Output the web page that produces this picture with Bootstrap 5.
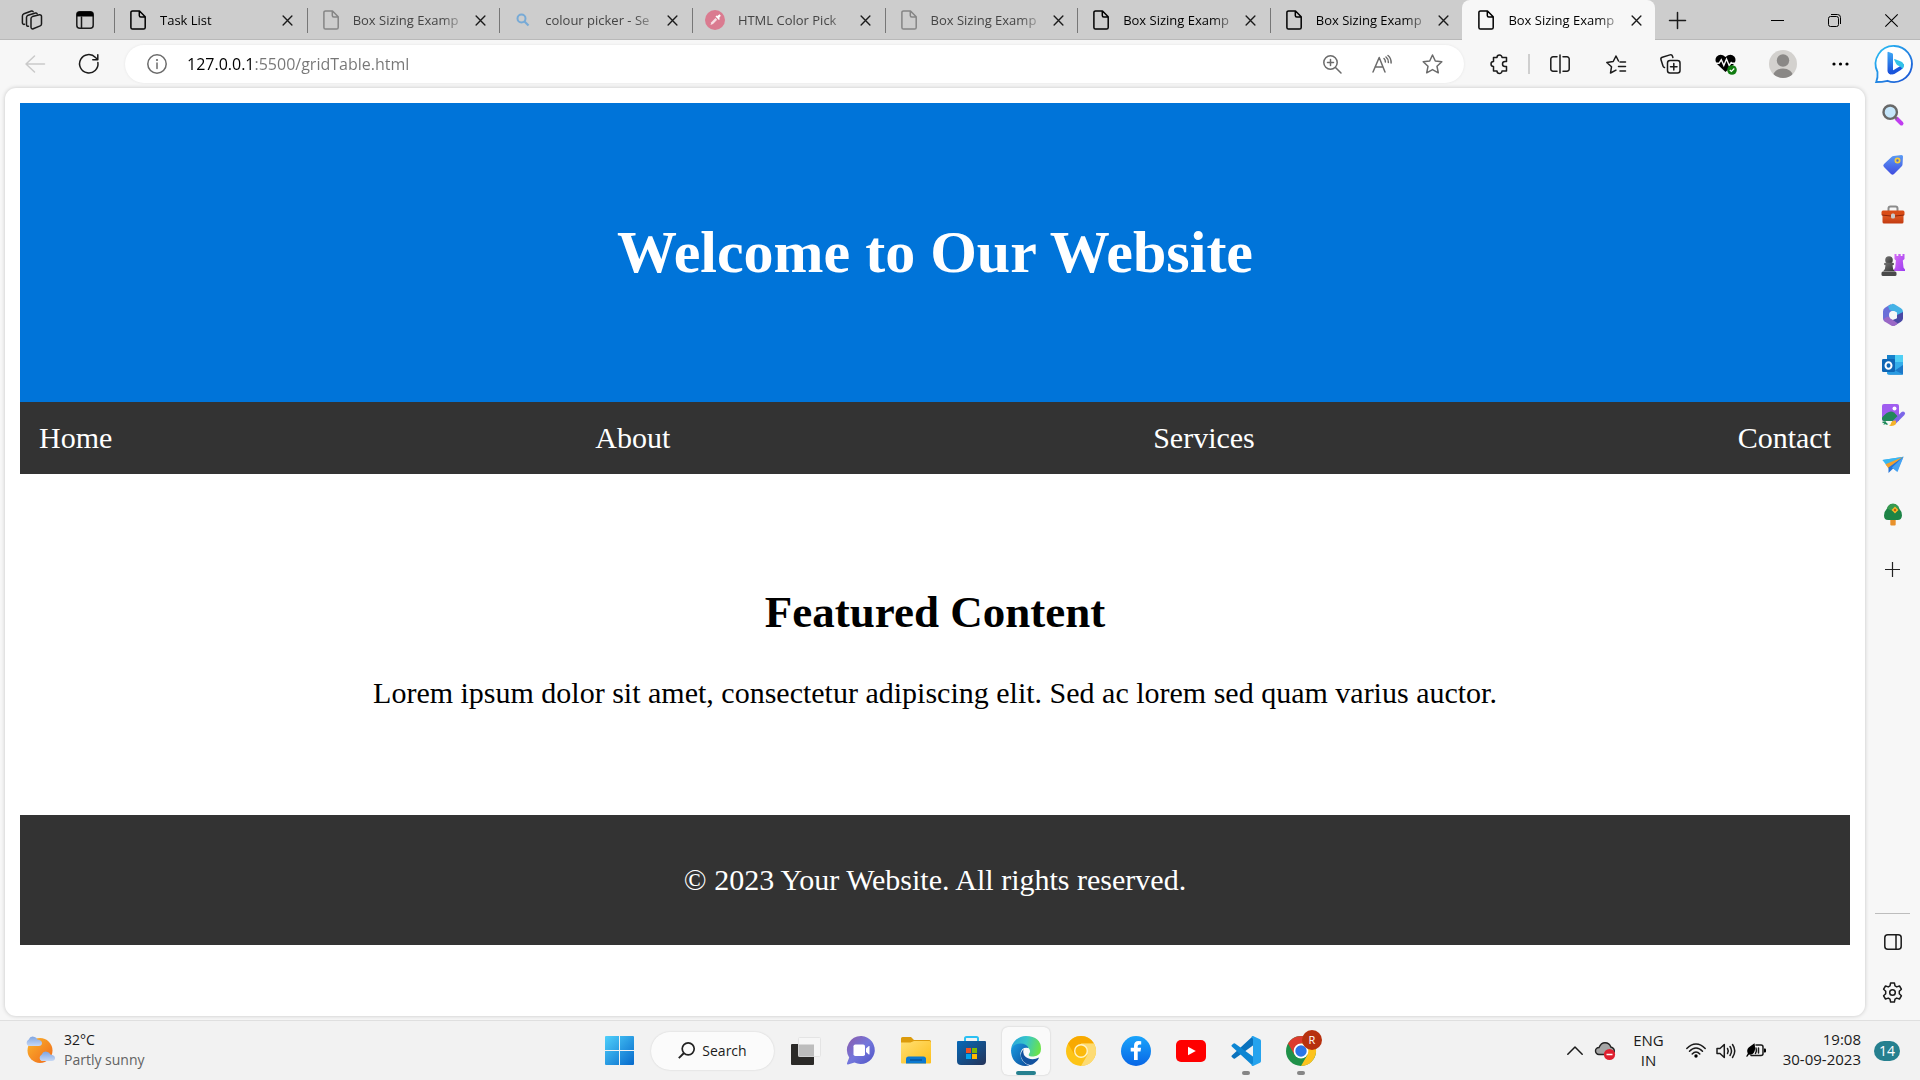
<!DOCTYPE html>
<html lang="en">
<head>
<meta charset="utf-8">
<meta name="viewport" content="width=device-width, initial-scale=1">
<title>Box Sizing Example</title>
<link href="https://cdn.jsdelivr.net/npm/bootstrap@5.3.0/dist/css/bootstrap.min.css" rel="stylesheet">
<style>
  body { font-family: "Open Sans", "Noto Sans", sans-serif; font-size: 13px; line-height: 20px; color: #1b1b1b; background: #f7f7f7; }
  button { border: 0; padding: 0; background: none; color: inherit; display: flex; align-items: center; justify-content: center; flex: none; }
  svg { display: block; flex: none; overflow: visible; }
  .ln { fill: none; stroke: currentColor; stroke-width: 1.5; stroke-linecap: round; stroke-linejoin: round; }

  /* tab strip */
  .tab-strip { height: 40px; background: #cdcdcd; box-shadow: inset 0 -1px #b9b9b9; }
  .strip-tools { width: 114px; padding-left: 5px; padding-right: 4px; }
  .strip-tools button { width: 53px; height: 40px; }
  .tab-list { flex: 0 1 1541px; min-width: 0; }
  .tab-item { flex: 1 1 0; min-width: 0; height: 40px; padding: 0 12px 0 14px; position: relative; }
  .tab-item::before { content: ""; position: absolute; left: 0; top: 8px; width: 1px; height: 25px; background: #777; }
  .tab-item.current { background: #f7f7f7; border-radius: 8px 8px 0 0; }
  .tab-item.current::before { display: none; }
  .tab-item a { color: #000; text-decoration: none; min-width: 0; flex: 1; gap: 12px; }
  .tab-item.asleep a { color: #444; }
  .tab-item.asleep svg.page { color: #858585; }
  .tab-title { flex: 1; overflow: hidden; white-space: nowrap; -webkit-mask-image: linear-gradient(to right, #000 calc(100% - 28px), transparent); mask-image: linear-gradient(to right, #000 calc(100% - 28px), transparent); }
  .tab-item button { width: 14px; height: 20px; margin-left: 4px; }
  .new-tab { width: 44px; height: 40px; }
  .win-btn { width: 57px; height: 40px; }

  /* toolbar */
  .tool-row { height: 48px; }
  .nav-btns { width: 125px; padding-left: 8px; }
  .nav-btns button { width: 54px; height: 40px; }
  .address { height: 38px; border-radius: 19px; background: #fff; box-shadow: 0 0 3px rgba(0,0,0,.08); padding: 0 7px 0 22px; color: #6b6b6b; min-width: 0; }
  .address input { border: 0; outline: 0; padding: 0; margin-left: 20px; min-width: 0; flex: 1; font-size: 16px; line-height: 24px; color: #767676; background: linear-gradient(to right, #000 67px, #767676 67px); -webkit-background-clip: text; background-clip: text; -webkit-text-fill-color: transparent; }
  .address button { width: 50px; height: 38px; }
  .t54 { width: 54px; height: 40px; }
  .t56 { width: 56px; height: 40px; }
  .t55 { width: 55px; height: 40px; }
  .t60 { width: 60px; height: 40px; }
  .t53 { width: 53px; height: 40px; }
  .tool-sep { width: 2px; height: 20px; background: #cfcfcf; margin: 0 2px; }

  /* page view */
  .view { margin: 0 0 4px 5px; padding: 15px; background: #fff; border-radius: 11px; box-shadow: 0 0 4px rgba(0,0,0,.2); font: 30px/34px "Liberation Serif", "Times New Roman", serif; color: #000; min-width: 0; }
  .site-head { background: #0074d9; color: #fff; padding: 75px; }
  .site-head h1 { font-size: 60px; line-height: 69px; font-weight: 700; margin: 40px 0; }
  .site-nav { background: #333; padding: 19px; }
  .site-nav a { color: #fff; text-decoration: none; }
  .site-main { padding: 75px; }
  .site-main h2 { font-size: 45px; line-height: 52px; font-weight: 700; margin: 37px 0 38px; }
  .site-main p, .site-foot p { margin: 30px 0; }
  .site-main p { margin-top: 0; }
  .site-foot { background: #333; color: #fff; padding: 18px; }

  /* side bar */
  .side-rail { width: 55px; padding: 2px 0 3px; }
  .side-rail button { width: 54px; height: 50px; }
  .side-rule { width: 35px; height: 1px; background: #bdbdbd; margin-bottom: 3px; }

  /* task bar */
  .task-bar { height: 60px; background: #f2f2f2; border-top: 1px solid #dfdfdf; font-size: 15px; }
  .task-side { flex: 1 1 0; padding: 0 20px; }
  .weather { gap: 9px; padding: 0 0 2px 5px; text-align: left; font-size: 14px; }
  .task-mid { gap: 7px; }
  .task-mid .app { width: 48px; height: 48px; border-radius: 6px; position: relative; }
  .task-mid .app.open { background: #fafafa; box-shadow: 0 0 2px rgba(0,0,0,.2); }
  .task-mid .app.run::after { content: ""; position: absolute; bottom: 0; left: 20px; width: 8px; height: 4px; border-radius: 2px; background: #868686; }
  .task-mid .app.open::after { left: 14px; width: 20px; background: #26808f; }
  .search-pill { width: 123px; height: 38px; border-radius: 19px; background: #fbfbfb; box-shadow: 0 0 2px rgba(0,0,0,.15); gap: 7px; margin: 0 1px; font-size: 14px; }
  .user-dot { position: absolute; right: 3px; top: 3px; width: 20px; height: 20px; border-radius: 10px; background: #b7310f; color: #fff; font-size: 11px; line-height: 20px; text-align: center; }
  .tray button { height: 48px; width: 30px; }
  .tray .lang { width: 57px; line-height: 20px; padding-bottom: 2px; }
  .tray .clock { width: 90px; line-height: 20px; text-align: right; justify-content: flex-end; padding-bottom: 3px; }
  .tray .alerts { width: 26px; height: 20px; border-radius: 10px; background: #26808f; color: #fff; font-size: 14px; margin-left: 13px; }
</style>
<script src="https://cdn.jsdelivr.net/npm/bootstrap@5.3.0/dist/js/bootstrap.bundle.min.js"></script>
</head>
<body class="vh-100 d-flex flex-column overflow-hidden">

<svg width="0" height="0" class="position-absolute" aria-hidden="true">
  <defs>
    <symbol id="page" viewBox="0 0 20 20"><path class="ln" d="M4.500 .9H11.500L17.200 6.800V17.500a1.600 1.600 0 0 1-1.600 1.600H4.500A1.600 1.600 0 0 1 2.900 17.500V2.500A1.600 1.600 0 0 1 4.500.9ZM11.300 1V5.500a1.500 1.500 0 0 0 1.500 1.500H17"/></symbol>
    <symbol id="cross" viewBox="0 0 12 12"><path class="ln" d="M1.200 1.200l9.600 9.600M10.800 1.200l-9.600 9.600"/></symbol>
    <linearGradient id="gBing" x1="0" y1="0" x2="1" y2="1"><stop stop-color="#2bc3f5"/><stop offset="1" stop-color="#1b4fd3"/></linearGradient>
    <linearGradient id="gBing2" x1="0" y1="0" x2="0" y2="1"><stop stop-color="#3fa9f5"/><stop offset="1" stop-color="#1748d8"/></linearGradient>
    <linearGradient id="gTag" x1="0" y1="0" x2="0" y2="1"><stop stop-color="#5b9cf5"/><stop offset="1" stop-color="#3f4bdf"/></linearGradient>
    <linearGradient id="gBox" x1="0" y1="0" x2="0" y2="1"><stop stop-color="#e8632a"/><stop offset="1" stop-color="#c23a10"/></linearGradient>
    <linearGradient id="gRook" x1="0" y1="0" x2="1" y2="1"><stop stop-color="#d76cf5"/><stop offset="1" stop-color="#9b3df0"/></linearGradient>
    <linearGradient id="gPawn" x1="0" y1="0" x2="1" y2="1"><stop stop-color="#777"/><stop offset="1" stop-color="#333"/></linearGradient>
    <linearGradient id="gSun" x1="0" y1="0" x2="1" y2="1"><stop stop-color="#fbb62d"/><stop offset="1" stop-color="#f0681a"/></linearGradient>
    <linearGradient id="gCloud" x1="0" y1="0" x2="0" y2="1"><stop stop-color="#7fa5e2"/><stop offset="1" stop-color="#c6d8f5"/></linearGradient>
    <linearGradient id="gWin" x1="0" y1="0" x2="1" y2="1"><stop stop-color="#4fd0fb"/><stop offset="1" stop-color="#0669cb"/></linearGradient>
    <linearGradient id="gChat" x1="0" y1="0" x2="1" y2="1"><stop stop-color="#8d5aa9"/><stop offset=".5" stop-color="#7377dc"/><stop offset="1" stop-color="#4f52c4"/></linearGradient>
    <linearGradient id="gFold" x1="0" y1="0" x2="1" y2="1"><stop stop-color="#ffdf73"/><stop offset="1" stop-color="#fdbf1a"/></linearGradient>
    <linearGradient id="gStore" x1="0" y1="0" x2="1" y2="1"><stop stop-color="#0669b8"/><stop offset="1" stop-color="#253358"/></linearGradient>
    <linearGradient id="gEdgeA" x1="0" y1=".2" x2="1" y2=".4"><stop stop-color="#2aa4dc"/><stop offset=".5" stop-color="#37c6c9"/><stop offset="1" stop-color="#6be34a"/></linearGradient>
    <linearGradient id="gEdgeB" x1="0" y1="0" x2="1" y2="1"><stop stop-color="#1b9de2"/><stop offset="1" stop-color="#0c4a9a"/></linearGradient>
    <linearGradient id="gFb" x1="0" y1="0" x2="0" y2="1"><stop stop-color="#1aa4fb"/><stop offset="1" stop-color="#0866e6"/></linearGradient>
  </defs>
</svg>

<header>
  <div class="tab-strip d-flex align-items-center">
    <div class="strip-tools d-flex">
      <button aria-label="Workspaces"><svg width="22" height="20" viewBox="0 0 22 20"><path class="ln" d="M10 8.500a2 2 0 0 1 1.400-1.900L18.500 4.800a1.600 1.600 0 0 1 2 1.500V14a2 2 0 0 1-1.300 1.900l-7 2.900a1.600 1.600 0 0 1-2.200-1.500zM7.500 16.300a1.600 1.600 0 0 1-2-1.500V7.500a2.500 2.500 0 0 1 1.600-2.300L14.500 3a1.500 1.500 0 0 1 1.600.6M3.500 14.300A1.600 1.600 0 0 1 1.400 13V6A2.500 2.500 0 0 1 3 3.700L10.500 1a1.500 1.500 0 0 1 1.600.6"/></svg></button>
      <button aria-label="Tab actions"><svg width="18" height="18" viewBox="0 0 18 18"><rect class="ln" x=".8" y=".8" width="16.400" height="16.400" rx="3"/><path d="M.8 5.500V3.500Q.8.8 3.500.8h11q2.700 0 2.700 2.700v2z"/><path class="ln" d="M5.500 6v11"/></svg></button>
    </div>
    <nav class="tab-list d-flex" aria-label="Tabs">
      <div class="tab-item d-flex align-items-center"><a href="#" class="d-flex align-items-center"><svg class="page" width="20" height="20"><use href="#page"/></svg><span class="tab-title">Task List</span></a><button aria-label="Close tab"><svg width="11" height="11"><use href="#cross"/></svg></button></div>
      <div class="tab-item asleep d-flex align-items-center"><a href="#" class="d-flex align-items-center"><svg class="page" width="20" height="20"><use href="#page"/></svg><span class="tab-title">Box Sizing Examp</span></a><button aria-label="Close tab"><svg width="11" height="11"><use href="#cross"/></svg></button></div>
      <div class="tab-item asleep d-flex align-items-center"><a href="#" class="d-flex align-items-center"><svg width="20" height="20" viewBox="0 0 20 20"><circle cx="8.500" cy="8.500" r="4" fill="none" stroke="#77aad6" stroke-width="2"/><path d="M11.500 11.500l4 4" stroke="#77aad6" stroke-width="2.200"/></svg><span class="tab-title">colour picker - Se</span></a><button aria-label="Close tab"><svg width="11" height="11"><use href="#cross"/></svg></button></div>
      <div class="tab-item asleep d-flex align-items-center"><a href="#" class="d-flex align-items-center"><svg width="20" height="20" viewBox="0 0 20 20"><circle cx="9" cy="10" r="10" fill="#da7b90"/><path d="M4.500 15l.8-2.800 4.200-4.200 1.700 1.700L7 13.900z" fill="#f7dfe4"/><path d="M9.500 6.500l3.400 3.400 1-1-.8-.9 1.700-2.300-1.300-1.400L11.300 6l-.8-.6z" fill="#fff"/></svg><span class="tab-title">HTML Color Pick</span></a><button aria-label="Close tab"><svg width="11" height="11"><use href="#cross"/></svg></button></div>
      <div class="tab-item asleep d-flex align-items-center"><a href="#" class="d-flex align-items-center"><svg class="page" width="20" height="20"><use href="#page"/></svg><span class="tab-title">Box Sizing Examp</span></a><button aria-label="Close tab"><svg width="11" height="11"><use href="#cross"/></svg></button></div>
      <div class="tab-item d-flex align-items-center"><a href="#" class="d-flex align-items-center"><svg class="page" width="20" height="20"><use href="#page"/></svg><span class="tab-title">Box Sizing Examp</span></a><button aria-label="Close tab"><svg width="11" height="11"><use href="#cross"/></svg></button></div>
      <div class="tab-item d-flex align-items-center"><a href="#" class="d-flex align-items-center"><svg class="page" width="20" height="20"><use href="#page"/></svg><span class="tab-title">Box Sizing Examp</span></a><button aria-label="Close tab"><svg width="11" height="11"><use href="#cross"/></svg></button></div>
      <div class="tab-item current d-flex align-items-center"><a href="#" class="d-flex align-items-center" aria-current="page"><svg class="page" width="20" height="20"><use href="#page"/></svg><span class="tab-title">Box Sizing Examp</span></a><button aria-label="Close tab"><svg width="11" height="11"><use href="#cross"/></svg></button></div>
    </nav>
    <button class="new-tab" aria-label="New tab"><svg width="17" height="17" viewBox="0 0 17 17"><path class="ln" d="M8.500.5v16M.5 8.500h16"/></svg></button>
    <div class="ms-auto d-flex">
      <button class="win-btn" aria-label="Minimize"><svg width="13" height="13" viewBox="0 0 13 13"><path d="M0 6.500h13" stroke="#000"/></svg></button>
      <button class="win-btn" aria-label="Restore"><svg width="13" height="13" viewBox="0 0 13 13"><rect x=".5" y="2.500" width="10" height="10" rx="2" fill="none" stroke="#000"/><path d="M3 .5h6.500a3 3 0 0 1 3 3V10" fill="none" stroke="#000"/></svg></button>
      <button class="win-btn" aria-label="Close"><svg width="13" height="13" viewBox="0 0 13 13"><path d="M.3.300l12.400 12.400M12.700.3L.3 12.700" stroke="#000" stroke-width="1.100"/></svg></button>
    </div>
  </div>

  <div class="tool-row d-flex align-items-center">
    <div class="nav-btns d-flex">
      <button aria-label="Back"><svg width="20" height="18" viewBox="0 0 20 18" style="color:#cacaca"><path class="ln" d="M9.500 1L1 9l8.500 8M1 9h18.500"/></svg></button>
      <button aria-label="Refresh"><svg width="20" height="20" viewBox="0 0 20 20"><path class="ln" d="M18.900 8.500A9.200 9.200 0 1 1 16.500 3.500L18.600 5.500M18.800.8v5H13.800"/></svg></button>
    </div>
    <div class="address d-flex align-items-center flex-fill">
      <svg width="20" height="20" viewBox="0 0 20 20"><circle class="ln" cx="10" cy="10" r="9.200"/><path class="ln" d="M10 9v5.500"/><circle cx="10" cy="6" r="1.100" fill="currentColor"/></svg>
      <input type="text" value="127.0.0.1:5500/gridTable.html" aria-label="Address">
      <button aria-label="Zoom"><svg width="19" height="19" viewBox="0 0 19 19"><circle class="ln" cx="7.500" cy="7.500" r="6.700"/><path class="ln" d="M12.500 12.500l5.500 5.500M7.500 4.500v6M4.500 7.500h6"/></svg></button>
      <button aria-label="Read aloud"><svg width="20" height="18" viewBox="0 0 20 18"><path class="ln" d="M1 17L7.200 2.500 13 17M3 12h8M12 3.500q1.500 1.500 1.400 3.500M14 2q2.500 2 2.400 5.500M16 .5q3.200 2.500 3.100 7.500"/></svg></button>
      <button aria-label="Add to favorites"><svg width="21" height="20" viewBox="0 0 21 20"><path class="ln" d="M10.500 1l2.800 6 6.500.8-4.800 4.500 1.300 6.500-5.800-3.200-5.800 3.200 1.300-6.500L1.200 7.800 7.700 7z"/></svg></button>
    </div>
    <div class="d-flex align-items-center ps-2">
      <button class="t54" aria-label="Extensions"><svg width="20" height="20" viewBox="0 0 20 20"><path class="ln" d="M4.500 3.500H8a2.500 2.500 0 1 1 5 0H17.500V7.500H16a2.500 2.500 0 0 0 0 5H17.500V17H13a2.500 2.500 0 0 1-5 0H4.500V12.500a2.500 2.500 0 1 1 0-5z"/></svg></button>
      <div class="tool-sep"></div>
      <button class="t56" aria-label="Split screen"><svg width="20" height="20" viewBox="0 0 20 20"><path class="ln" d="M7 2.800H3a2.200 2.200 0 0 0-2.200 2.200v10A2.200 2.200 0 0 0 3 17.200h4M13 2.800h4a2.200 2.200 0 0 1 2.200 2.200v10a2.200 2.200 0 0 1-2.200 2.200h-4M10 1v18"/></svg></button>
      <button class="t55" aria-label="Favorites"><svg width="20" height="19" viewBox="0 0 20 19"><path class="ln" d="M12.500 6L10 1 7.200 6.500.8 7.500l4.700 4.300-1 6.200 5.500-2.800M14 7H19.500M12.500 11.500h7M14 16h5.500"/></svg></button>
      <button class="t55" aria-label="Collections"><svg width="21" height="20" viewBox="0 0 21 20"><rect class="ln" x="7.500" y="6.500" width="12.500" height="12.500" rx="2.500"/><path class="ln" d="M13.800 9.500v6.500M10.500 12.800H17M4.500 13.500a2 2 0 0 1-1.500-1.400L1 5.800A2 2 0 0 1 2.300 3.300L10 .9a2 2 0 0 1 2.500 1.300l.4 1.300"/></svg></button>
      <button class="t55" aria-label="Browser essentials"><svg width="22" height="21" viewBox="0 0 22 21"><path d="M10.500 18L2 10Q-.8 6 1.500 2.800 5.500-1.200 10.500 3q5-4.200 9-.2Q21.800 6 19 10z"/><path d="M0 9.300h4l2.300-3.500 2.500 5.700L11.500 5l2.700 6.500 2-3 1 .8H21" fill="none" stroke="#f7f7f7" stroke-width="1.400"/><circle cx="17" cy="16" r="4.800" fill="#107c10"/><path d="M14.800 16l1.600 1.500 2.900-3" fill="none" stroke="#fff" stroke-width="1.200"/></svg></button>
      <button class="t60" aria-label="Profile"><svg width="28" height="28" viewBox="0 0 28 28"><clipPath id="cAv"><circle cx="14" cy="14" r="14"/></clipPath><g clip-path="url(#cAv)"><rect width="28" height="28" fill="#d3d1ce"/><circle cx="14" cy="10.500" r="6.200" fill="#8a8886"/><ellipse cx="14" cy="26" rx="10" ry="7.500" fill="#8a8886"/></g></svg></button>
      <button class="t54" aria-label="Settings and more"><svg width="17" height="4" viewBox="0 0 17 4"><circle cx="2" cy="2" r="1.600"/><circle cx="8.500" cy="2" r="1.600"/><circle cx="15" cy="2" r="1.600"/></svg></button>
      <button class="t53" aria-label="Bing Chat"><svg width="38" height="38" viewBox="0 0 38 38"><path d="M19.500 1A18 18 0 1 1 12.500 35.800Q7 37 1.200 37 3 33 2.500 27A18 18 0 0 1 19.500 1z" fill="#fff" stroke="url(#gBing)" stroke-width="1.800"/><path d="M12.500 7.500q0-1 1.100-.6l3.600 1.400q.8.300.8 1.400V26l-2.200 3.500q-3.300-1-3.300-4z" fill="url(#gBing2)"/><path d="M12.800 25.500q1.500 5.200 6.500 3.500l6.500-4Q29 22.500 28.800 19l-9.300 5.500q-3.500 2.500-6.700 1z" fill="#1a55dc"/><path d="M19.300 15q-.5-1.300.9-.8l5.800 2.300q3 1.500 2.900 4.500-.3 2-1.500 3-.9-2-3.400-3-2.300-.8-3-2.500z" fill="#33c3e8"/></svg></button>
    </div>
  </div>
</header>

<div class="d-flex flex-fill">
  <div class="view flex-fill">
    <header class="site-head text-center"><h1>Welcome to Our Website</h1></header>
    <nav class="site-nav d-flex justify-content-between">
      <a href="#">Home</a><a href="#">About</a><a href="#">Services</a><a href="#">Contact</a>
    </nav>
    <main class="site-main text-center">
      <h2>Featured Content</h2>
      <p>Lorem ipsum dolor sit amet, consectetur adipiscing elit. Sed ac lorem sed quam varius auctor.</p>
    </main>
    <footer class="site-foot text-center"><p>© 2023 Your Website. All rights reserved.</p></footer>
  </div>

  <aside class="side-rail d-flex flex-column align-items-center flex-shrink-0">
    <button aria-label="Search"><svg width="22" height="22" viewBox="0 0 22 22"><path d="M14.500 14.500l5 5" stroke="#c03df0" stroke-width="4" stroke-linecap="round"/><path d="M12 12l3 3" stroke="#777" stroke-width="2"/><circle cx="8.200" cy="8.200" r="6.700" fill="#c5e6fb" stroke="#686868" stroke-width="2.400"/></svg></button>
    <button aria-label="Shopping"><svg width="22" height="22" viewBox="0 0 22 22"><path d="M11.500 2l8-1q1.500 0 1.500 1.500l-.5 8q0 1-1 2l-7.500 7.500q-1.500 1.500-3 0l-7-7q-1.500-1.500 0-3l7.500-7q1-.9 2-1z" fill="url(#gTag)"/><circle cx="15.500" cy="6.500" r="2.100" fill="#4a68d4" stroke="#f6cc3b" stroke-width="1.800"/></svg></button>
    <button aria-label="Tools"><svg width="24" height="22" viewBox="0 0 24 22"><path d="M7.500 7V4.500q0-2 2-2h5q2 0 2 2V7" fill="none" stroke="#8b8b8b" stroke-width="2"/><rect x="1.500" y="9" width="21" height="10.500" rx="1.500" fill="url(#gBox)"/><path d="M2 6.500h20q1.500 0 1.500 2v2.300Q12 13.500.5 10.800V8.500q0-2 1.500-2z" fill="#d94c17"/><path d="M.8 11q11.200 2.600 22.400 0" stroke="#8f260a" fill="none"/><rect x="10" y="9.500" width="4" height="5" rx="1.500" fill="#c9c9c9"/></svg></button>
    <button aria-label="Games"><svg width="24" height="24" viewBox="0 0 24 24"><path d="M13.500 1h2v2h1.800V1h2.400v2h1.800V1h2v5l-1.700 1.500.7 7 1.500 2V18h-11v-1.500l1.200-2 .7-7L13.500 6z" fill="url(#gRook)"/><circle cx="8" cy="7" r="3.800" fill="url(#gPawn)"/><path d="M3 11q0-1.300 1.300-1.300h7.400Q13 9.700 13 11t-1.500 1.300q0 4 2.300 6H2.200q2.300-2 2.300-6Q3 12.300 3 11z" fill="url(#gPawn)"/><rect x=".5" y="18.500" width="15" height="4.500" rx="1.500" fill="#4a4a4a"/></svg></button>
    <button aria-label="Microsoft 365"><svg width="22" height="24" viewBox="0 0 22 24"><path d="M8.500 1.200L3 4.800Q1 6 1 8.500v7q0 2 2 3.200l5-2.500V9.500l5-3z" fill="#6a6fd8"/><path d="M10 .9q1.200-.3 2.500.3l6.500 4q2 1.200 2 3.500v5l-6-1.500V9.500L7.500 7 6 3.300z" fill="#45b2e6"/><path d="M15 12l6-3v6.500q0 2-2 3.200l-6.500 4-3.500-5 6-2.500z" fill="#4a48a5"/><path d="M3 18.700l6.500 4q1.500.8 3 0l3.500-2.200-8-5.500-2.500-1.500L1.500 16q.2 1.800 1.500 2.700z" fill="#9a68c6"/><circle cx="11" cy="12" r="4" fill="#f7f7f7"/></svg></button>
    <button aria-label="Outlook"><svg width="22" height="22" viewBox="0 0 22 22"><rect x="5" y="1" width="16" height="19.500" rx="1.300" fill="#35aeeb"/><path d="M5 1h8v7H5z" fill="#1682cb"/><path d="M13 1h8v7h-8z" fill="#50d0f5"/><path d="M21 11v9.500H7z" fill="#1c78c9"/><path d="M5 12l16 8.500H6z" fill="#2b9be2"/><rect x="0" y="5" width="13" height="13" rx="1.300" fill="#0f66b5"/><ellipse cx="6.500" cy="11.500" rx="3" ry="3.300" fill="none" stroke="#fff" stroke-width="2"/></svg></button>
    <button aria-label="Image creator"><svg width="24" height="24" viewBox="0 0 24 24"><rect x="1" y="1" width="17" height="17" rx="2" fill="#a05df0"/><path d="M1 14.500q7-8.500 12-5l5 5V18H3q-2 0-2-2z" fill="#21885a"/><circle cx="13.500" cy="5.500" r="2" fill="#fff"/><path d="M22 10.500l-9 9" stroke="#7c66e8" stroke-width="4" stroke-linecap="round"/><path d="M14.800 17.500q1.500 5-4.300 5.500l-2.500-.3q2-1 2.200-3 .8-2.800 4.600-2.200z" fill="#f5b429"/><path d="M1.500 19.500q4-1.500 2.500 1 2-.5 2 1.300" fill="none" stroke="#1e8a5a" stroke-width="1.600"/></svg></button>
    <button aria-label="Drop"><svg width="22" height="18" viewBox="0 0 22 18"><path d="M.5 4L21.500.800 15 15.500l-4-3z" fill="#3ea3ee"/><path d="M.5 4l21-3.200L5 10z" fill="#39b8f2"/><path d="M3.500 8.200L21.500.8 6.500 12.500z" fill="#f2a12e"/><path d="M6.500 11.500v5.500l4.300-4.300L21.500.8z" fill="#2373d8"/><path d="M10 11.500L21.500.8 15.500 16z" fill="#46a2f2"/></svg></button>
    <button aria-label="Tree"><svg width="20" height="24" viewBox="0 0 20 24"><path d="M7.300 15h5.400v6.500q0 1-1 1H8.300q-1 0-1-1z" fill="#e8912b"/><path d="M10 .8q4.500 0 6 4.500Q19 8.500 19 12.500q-.5 5-5 4.500H6q-5 .5-5-4.500Q1 8.500 4 5.500 5.500.8 10 .8z" fill="#1d8446"/><path d="M10 .8q4.500 0 6 4.500-6 4-12 .2Q5.500.8 10 .8z" fill="#379a50"/><path d="M12 3.500l1.700 1.700L15.500 7l-1.800 1.800L12 10.500l-1.700-1.700L8.500 7l1.800-1.800z" fill="#f5b928"/><circle cx="12" cy="7" r="1.200" fill="#c9570f"/></svg></button>
    <button class="mt-1" aria-label="Customize"><svg width="15" height="15" viewBox="0 0 15 15"><path d="M7.500 0v15M0 7.500h15" stroke="#222" stroke-width="1.200"/></svg></button>
    <div class="side-rule mt-auto"></div>
    <button aria-label="Hide side bar"><svg width="18" height="16" viewBox="0 0 18 16"><rect class="ln" x=".8" y=".8" width="16.400" height="14.400" rx="3"/><path class="ln" d="M12 1v14"/></svg></button>
    <button aria-label="Settings"><svg width="21" height="21" viewBox="0 0 21 21"><path class="ln" d="M8.600 1h3.800l.6 2.900 1.700 1 2.800-.9 1.900 3.200-2.100 2v2.600l2.100 2-1.900 3.200-2.800-.9-1.700 1-.6 2.900H8.600L8 17.100l-1.700-1-2.800.9-1.900-3.200 2.100-2V9.200l-2.100-2L3.500 4l2.800.9 1.700-1z"/><circle class="ln" cx="10.500" cy="10.500" r="2.800"/></svg></button>
  </aside>
</div>

<footer class="task-bar d-flex align-items-center flex-shrink-0">
  <div class="task-side d-flex">
    <button class="weather"><svg width="30" height="30" viewBox="0 0 30 30"><circle cx="15" cy="15.500" r="12.500" fill="url(#gSun)"/><path d="M3.500 11a3.500 3.500 0 0 1 0-6.200Q5.500.5 9.500 2q2 .3 2.800 2.500Q17 5 17 8q0 3-3.500 3z" fill="url(#gCloud)"/><path d="M16.500 26a3.500 3.500 0 0 1 0-6.200q2-4.300 6-2.800 2 .3 2.800 2.500Q30 20 30 23q0 3-3.500 3z" fill="url(#gCloud)"/></svg><span class="d-block">32°C<br><span style="color:#626262">Partly sunny</span></span></button>
  </div>
  <div class="task-mid d-flex align-items-center">
    <button class="app" aria-label="Start"><svg width="29" height="29" viewBox="0 0 29 29"><path d="M0 1q0-1 1-1h13v14H0zM15 0h13q1 0 1 1v13H15zM0 15h14v14H1q-1 0-1-1zM15 15h14v13q0 1-1 1H15z" fill="url(#gWin)"/></svg></button>
    <button class="search-pill"><svg width="17" height="17" viewBox="0 0 17 17"><circle cx="10.200" cy="6.800" r="6" fill="none" stroke="#222" stroke-width="1.700"/><path d="M6 11L.8 16.200" stroke="#222" stroke-width="1.900"/></svg><span>Search</span></button>
    <button class="app" aria-label="Task view"><svg width="30" height="28" viewBox="0 0 30 28"><rect y="7" width="23" height="21" rx="1" fill="#2b2a28"/><rect x="7.500" y=".5" width="22" height="19" rx="1" fill="#f6f6f6" stroke="#e4e4e4"/><path d="M7.500 7.500H23v12H7.500z" fill="#bdbdbd"/></svg></button>
    <button class="app" aria-label="Chat"><svg width="29" height="29" viewBox="0 0 29 29"><path d="M14.500 0a14 14 0 1 1-7 26.500L1 28.500q-1.500 0-1-1.300l2.200-5.700A14 14 0 0 1 14.500 0z" fill="url(#gChat)"/><rect x="6.500" y="8.500" width="11.500" height="11.500" rx="1.800" fill="#fff"/><path d="M19 12.500l2.500-2.300q1-.7 1 .4v7.300q0 1-1 .4L19 16z" fill="#fff"/></svg></button>
    <button class="app" aria-label="File Explorer"><svg width="30" height="27" viewBox="0 0 30 27"><path d="M0 1.500Q0 0 1.500 0H10l3 3h15.500Q30 3 30 4.500V10H0z" fill="#dc9b0c"/><path d="M0 5.500h9.500L13 4h15.500Q30 4 30 5.500v20q0 1-1 1H1q-1 0-1-1z" fill="url(#gFold)"/><path d="M5 26.500V22q0-2.500 2.500-2.500h15q2.500 0 2.500 2.500v4.500z" fill="#0b79d0"/><path d="M9 23h12" stroke="#084b8f" stroke-width="1.200"/></svg></button>
    <button class="app" aria-label="Microsoft Store"><svg width="29" height="30" viewBox="0 0 29 30"><path d="M8 6V2.500Q8 1 9.500 1h10Q21 1 21 2.500V6" fill="none" stroke="#2bc0f3" stroke-width="2"/><path d="M0 6q0-1 1-1h27q1 0 1 1v19q0 4-4 4H4q-4 0-4-4z" fill="url(#gStore)"/><path d="M9 12h5v5H9z" fill="#f25022"/><path d="M15 12h5v5h-5z" fill="#7fba00"/><path d="M9 18h5v5H9z" fill="#00a4ef"/><path d="M15 18h5v5h-5z" fill="#ffb900"/></svg></button>
    <button class="app open run" aria-label="Microsoft Edge"><svg width="30" height="30" viewBox="0 0 30 30"><path d="M0 14A15 15 0 0 1 15 0q15 .5 15 13 0 7-7.500 7.500-6 0-4.500-2.500 2.500-3-.8-6.300Q8 4 0 14z" fill="url(#gEdgeA)"/><path d="M0 14q2.500-6.500 9.500-6.500 6 .2 8 4.500-6.500-1.500-8 5Q9 26 18.500 29.500 9 31.500 3.500 25 0 21 0 14z" fill="url(#gEdgeB)"/><path d="M12.500 13q-5.500 6 0 12.500 6 6 11 1.500 4-3 4.500-5.500-5.500 3-11 .8Q11 19.500 12.500 13z" fill="#12529f"/></svg></button>
    <button class="app" aria-label="Chrome Canary"><svg width="30" height="30" viewBox="0 0 30 30"><circle cx="15" cy="15" r="15" fill="#fdc417"/><path d="M2 7.500A15 15 0 0 1 28 7.500H15L8.500 18.800z" fill="#f8a900"/><path d="M28 7.500A15 15 0 0 1 15 30L21.500 18.700 15 7.500z" fill="#fddb74"/><circle cx="15" cy="15" r="7" fill="#fff3c8"/><circle cx="15" cy="15" r="5.600" fill="#fbb90c"/></svg></button>
    <button class="app" aria-label="Facebook"><svg width="30" height="30" viewBox="0 0 30 30"><circle cx="15" cy="15" r="15" fill="url(#gFb)"/><path d="M13 24v-8.500H9.700v-3.700H13V10q0-5 4.500-5 1.500 0 2.700.3v3.200h-1.700q-1.800 0-1.800 1.700v1.600h3.400l-.6 3.700h-2.800V24z" fill="#fff"/></svg></button>
    <button class="app" aria-label="YouTube"><svg width="30" height="22" viewBox="0 0 30 22"><rect width="30" height="22" rx="5" fill="#f00"/><path d="M12 6.800l7.800 4.200-7.800 4.200z" fill="#fff"/></svg></button>
    <button class="app run" aria-label="Visual Studio Code"><svg width="30" height="30" viewBox="0 0 30 30"><path d="M22 0L.8 19.500q-.8.800 0 1.500l1.800 1.600q.7.500 1.400 0L24 8z" fill="#0a72bd"/><path d="M22 30L.8 10.500q-.8-.8 0-1.500l1.800-1.600q.7-.5 1.400 0L24 22z" fill="#0d86d3"/><path d="M22 0l7 3.200q1 .5 1 1.700v20.200q0 1.200-1 1.700L22 30q-1 .2-1.500-.8L22 27V3L20.500.8Q21-.2 22 0z" fill="#25a3ee"/></svg></button>
    <button class="app run" aria-label="Google Chrome"><svg width="30" height="30" viewBox="0 0 30 30"><circle cx="15" cy="15" r="15" fill="#1f9149"/><path d="M2 7.500A15 15 0 0 1 28 7.500H15L8.500 18.800z" fill="#dc3b2e"/><path d="M28 7.500A15 15 0 0 1 15 30L21.500 18.700 15 7.500z" fill="#fcc31e"/><circle cx="15" cy="15" r="7.400" fill="#fff"/><circle cx="15" cy="15" r="5.700" fill="#2a75e8"/></svg><span class="user-dot">R</span></button>
  </div>
  <div class="task-side tray d-flex align-items-center justify-content-end">
    <button aria-label="Show hidden icons"><svg width="16" height="9" viewBox="0 0 16 9"><path class="ln" d="M.8 8.200L8 1l7.200 7.200"/></svg></button>
    <button aria-label="OneDrive"><svg width="20" height="18" viewBox="0 0 20 18"><path d="M4 12.500a3.500 3.500 0 0 1 0-7Q6 .8 10 .8q4.500 0 5.800 4.200Q19.300 6 19.300 9q0 3.500-3.500 3.500z" fill="#a5a5a5" stroke="#222" stroke-width="1.400"/><circle cx="14.500" cy="12.500" r="5.600" fill="#df1f2f"/><path d="M11.500 12.500h6" stroke="#fff" stroke-width="1.500"/></svg></button>
    <button class="lang">ENG<br>IN</button>
    <button class="ms-1" aria-label="Network"><svg width="20" height="15" viewBox="0 0 20 15"><path class="ln" d="M.8 5.500Q5 1 10 1t9.200 4.500M3.500 8.300Q6.500 5 10 5t6.500 3.300M6.200 11Q8 9 10 9t3.800 2"/><circle cx="10" cy="13" r="1.700"/></svg></button>
    <button aria-label="Volume"><svg width="20" height="16" viewBox="0 0 20 16"><path class="ln" d="M1 5.500h3L8.300 1.500V14.500L4 10.500H1zM11.500 5.500q1.500 2.500 0 5M14 3.500q3 4.500 0 9M16.500 1.500q4.500 6.500 0 13"/></svg></button>
    <button aria-label="Battery"><svg width="20" height="15" viewBox="0 0 20 15"><path class="ln" d="M10 2h5q2 0 2 2v6.500q0 2-2 2H5"/><path d="M18 5.500h1q1 0 1 1v2q0 1-1 1h-1z"/><path d="M8.500.3q1.500 7-.8 9.700-2 2.500-4.700 1.500L1 14l-.8-.7L1.800 10.500Q.2 7 2.700 4.500 5 2.800 8.500.3z"/><path class="ln" d="M10 5q1 2.500-.5 5.500M12.500 5v5"/></svg></button>
    <button class="clock">19:08<br>30-09-2023</button>
    <button class="alerts" aria-label="14 notifications">14</button>
  </div>
</footer>
</body>
</html>
